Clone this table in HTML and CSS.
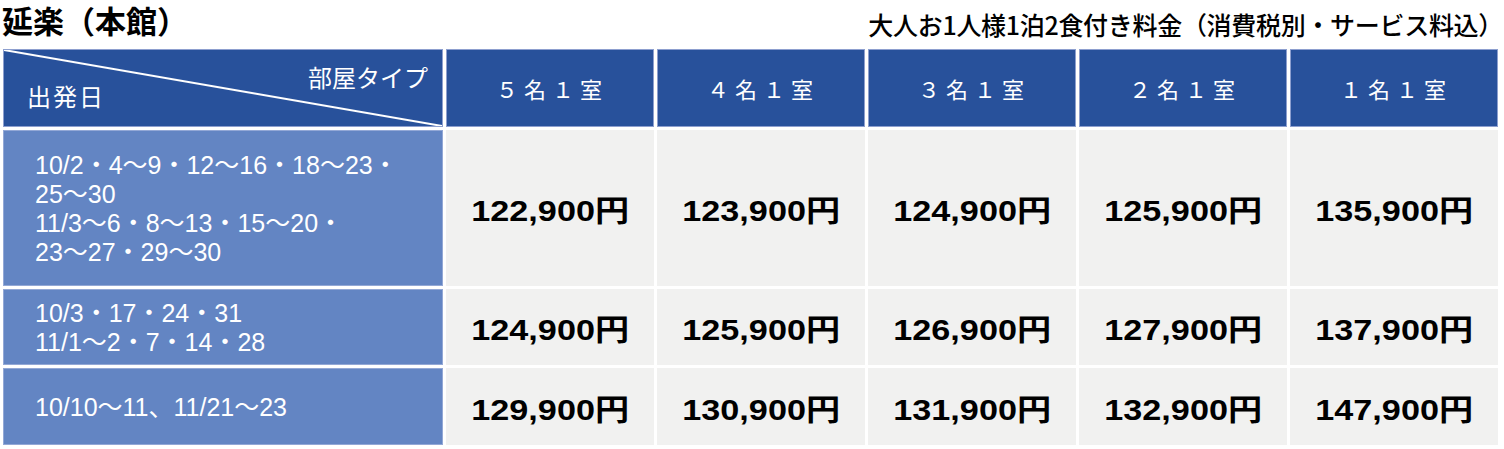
FILE: index.html
```html
<!DOCTYPE html>
<html lang="ja">
<head>
<meta charset="utf-8">
<title>延楽（本館）</title>
<link rel="stylesheet" href="styles.css">
</head>
<body>
<div class="page">
  <div class="top">
    <h1 class="title">延楽（本館）</h1>
    <p class="note">大人お1人様1泊2食付き料金（消費税別・サービス料込）</p>
  </div>
  <div class="grid">
    <div class="cell corner">
      <span class="c-date">出発日</span>
      <span class="c-type">部屋タイプ</span>
    </div>
    <div class="cell head">５名１室</div>
    <div class="cell head">４名１室</div>
    <div class="cell head">３名１室</div>
    <div class="cell head">２名１室</div>
    <div class="cell head">１名１室</div>

    <div class="cell date">10/2・4〜9・12〜16・18〜23・<br>25〜30<br>11/3〜6・8〜13・15〜20・<br>23〜27・29〜30</div>
    <div class="cell price"><span>122,900円</span></div>
    <div class="cell price"><span>123,900円</span></div>
    <div class="cell price"><span>124,900円</span></div>
    <div class="cell price"><span>125,900円</span></div>
    <div class="cell price"><span>135,900円</span></div>

    <div class="cell date">10/3・17・24・31<br>11/1〜2・7・14・28</div>
    <div class="cell price"><span>124,900円</span></div>
    <div class="cell price"><span>125,900円</span></div>
    <div class="cell price"><span>126,900円</span></div>
    <div class="cell price"><span>127,900円</span></div>
    <div class="cell price"><span>137,900円</span></div>

    <div class="cell date">10/10〜11、11/21〜23</div>
    <div class="cell price"><span>129,900円</span></div>
    <div class="cell price"><span>130,900円</span></div>
    <div class="cell price"><span>131,900円</span></div>
    <div class="cell price"><span>132,900円</span></div>
    <div class="cell price"><span>147,900円</span></div>
  </div>
</div>
</body>
</html>
```
FILE: styles.css
```css
html, body {
  margin: 0;
  padding: 0;
  background: #ffffff;
}
body {
  font-family: "Liberation Sans", "Noto Sans CJK JP", sans-serif;
  color: #000;
}
.page {
  padding: 0 4px 0 3px;
  width: 1497px;
}
.top {
  display: flex;
  justify-content: space-between;
  align-items: flex-end;
  height: 46px;
  margin-bottom: 3px;
}
.title {
  margin: 0;
  align-self: flex-start;
  font-family: "Noto Sans CJK JP", sans-serif;
  font-weight: 700;
  font-size: 31px;
  line-height: 36px;
  padding-top: 2px;
  margin-left: -1px;
}
.note {
  margin: 0 -3px 7px 0;
  font-family: "Noto Sans CJK JP", sans-serif;
  font-weight: 500;
  font-size: 25px;
  line-height: 30px;
  letter-spacing: -0.3px;
}
.grid {
  display: grid;
  grid-template-columns: 440px repeat(5, 208px);
  grid-template-rows: 78px 156px 76px 77px;
  gap: 3px;
}
.cell {
  box-sizing: border-box;
  display: flex;
  align-items: center;
}
.corner {
  position: relative;
  background: #28519b linear-gradient(to top right, transparent calc(50% - 1.5px), #ffffff calc(50% - 0.5px), #ffffff calc(50% + 0.5px), transparent calc(50% + 1.5px));
  border: 1px solid #8d9fcf;
  color: #fff;
  font-family: "Noto Sans CJK JP", sans-serif;
  font-size: 24px;
}
.c-date {
  position: absolute;
  left: 23px;
  top: 28px;
  letter-spacing: 2px;
}
.c-type {
  position: absolute;
  right: 14px;
  top: 9px;
}
.head {
  background: #28519b;
  border: 1px solid #8d9fcf;
  color: #fff;
  justify-content: center;
  font-family: "Noto Sans CJK JP", sans-serif;
  font-size: 22px;
  letter-spacing: 6px;
  padding-left: 4px;
}
.date {
  background: #6385c3;
  border: 1px solid #93a8d6;
  color: #fff;
  font-family: "Liberation Sans", "Noto Sans CJK JP", sans-serif;
  font-size: 25px;
  line-height: 29px;
  padding-left: 31px;
  padding-top: 2px;
}
.price {
  background: #f1f1f0;
  justify-content: center;
  font-family: "Liberation Sans", "Noto Sans CJK JP", sans-serif;
  font-weight: 700;
  font-size: 30px;
}
.price span {
  display: inline-block;
  transform: scaleX(1.14);
}
```
